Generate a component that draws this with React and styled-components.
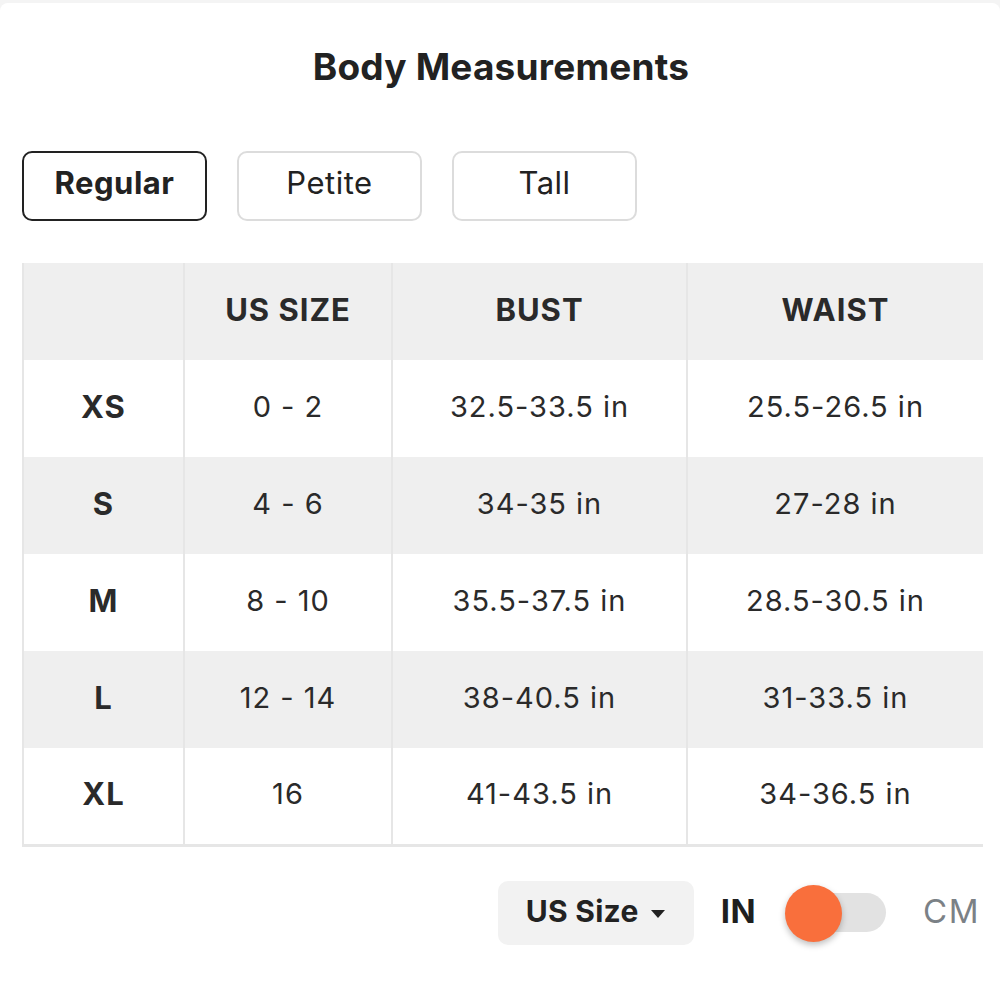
import React from "react";
import styled, { createGlobalStyle } from "styled-components";

const Global = createGlobalStyle`
  html, body { margin: 0; padding: 0; background: #f4f4f4; }
  body { font-family: "Inter", "Liberation Sans", sans-serif; color: #262626; }
`;

const Card = styled.div`
  margin-top: 3px;
  background: #fff;
  border-radius: 8px 8px 0 0;
  min-height: 997px;
  padding: 0 20px 0 22px;
  box-sizing: border-box;
  overflow: hidden;
`;

const Title = styled.h1`
  margin: 0;
  padding-top: 41px;
  height: 104px;
  box-sizing: border-box;
  text-align: center;
  font-size: 37px;
  font-weight: 700;
  letter-spacing: 0.2px;
  color: #222;
`;

const Tabs = styled.div`
  display: flex;
  gap: 30px;
  margin-top: 44px;
`;

const Tab = styled.button`
  width: 185px;
  height: 70px;
  box-sizing: border-box;
  background: #fff;
  border: 2px solid ${(p) => (p.$active ? "#222" : "#dcdcdc")};
  border-radius: 10px;
  font-family: inherit;
  font-size: 31px;
  letter-spacing: 0.5px;
  font-weight: ${(p) => (p.$active ? 700 : 400)};
  color: #222;
  padding: 0 0 8px;
`;

const Table = styled.table`
  margin-top: 42px;
  width: 960px;
  border-collapse: collapse;
  table-layout: fixed;
  border-left: 2px solid #e6e6e6;
  border-bottom: 3px solid #e6e6e6;
`;

const Row = styled.tr`
  height: 97px;
  background: ${(p) => (p.$shade ? "#efefef" : "#fff")};
`;

const Cell = styled.td`
  text-align: center;
  vertical-align: middle;
  font-size: ${(p) => (p.$bold ? 31 : 29)}px;
  letter-spacing: 1px;
  font-weight: ${(p) => (p.$bold ? 700 : 400)};
  color: #2a2a2a;
  border-right: 2px solid #e6e6e6;
  padding: 0 0 5px;
  &:last-child { border-right: none; }
`;

const Footer = styled.div`
  display: flex;
  justify-content: flex-end;
  align-items: center;
  margin-top: 34px;
  padding-right: 0;
`;

const Select = styled.div`
  display: flex;
  align-items: center;
  justify-content: center;
  gap: 11px;
  width: 196px;
  height: 64px;
  padding-bottom: 3px;
  box-sizing: border-box;
  background: #f2f2f2;
  border-radius: 10px;
  font-size: 30px;
  letter-spacing: 0.3px;
  font-weight: 700;
  color: #222;
`;

const Caret = styled.svg`
  width: 16px;
  height: 10px;
  margin-top: 5px;
`;

const UnitLabel = styled.span`
  font-size: 33px;
  letter-spacing: ${(p) => (p.$on ? 0.5 : 1.5)}px;
  font-weight: ${(p) => (p.$on ? 700 : 400)};
  color: ${(p) => (p.$on ? "#1f1f1f" : "#7b8186")};
  margin-left: ${(p) => p.$ml}px;
  padding-bottom: 3px;
`;

const Switch = styled.div`
  position: relative;
  width: 101px;
  height: 40px;
  margin-left: 29px;
  display: flex;
  align-items: center;
`;

const Track = styled.div`
  margin-left: 16px;
  width: 85px;
  height: 39px;
  border-radius: 20px;
  background: #e2e2e2;
`;

const Knob = styled.div`
  position: absolute;
  left: 0;
  top: -8px;
  width: 57px;
  height: 57px;
  border-radius: 50%;
  background: #f96f3c;
  box-shadow: 0 3px 6px rgba(0, 0, 0, 0.25);
`;

const rows = [
  ["XS", "0 - 2", "32.5-33.5 in", "25.5-26.5 in"],
  ["S", "4 - 6", "34-35 in", "27-28 in"],
  ["M", "8 - 10", "35.5-37.5 in", "28.5-30.5 in"],
  ["L", "12 - 14", "38-40.5 in", "31-33.5 in"],
  ["XL", "16", "41-43.5 in", "34-36.5 in"],
];

export default function App() {
  return (
    <>
      <Global />
      <Card>
        <Title>Body Measurements</Title>
        <Tabs>
          <Tab $active>Regular</Tab>
          <Tab>Petite</Tab>
          <Tab>Tall</Tab>
        </Tabs>
        <Table>
          <colgroup>
            <col style={{ width: 161 }} />
            <col style={{ width: 208 }} />
            <col style={{ width: 295 }} />
            <col style={{ width: 296 }} />
          </colgroup>
          <tbody>
            <Row $shade>
              <Cell />
              <Cell $bold>US SIZE</Cell>
              <Cell $bold>BUST</Cell>
              <Cell $bold>WAIST</Cell>
            </Row>
            {rows.map((r, i) => (
              <Row key={r[0]} $shade={i % 2 === 1}>
                <Cell $bold>{r[0]}</Cell>
                <Cell>{r[1]}</Cell>
                <Cell>{r[2]}</Cell>
                <Cell>{r[3]}</Cell>
              </Row>
            ))}
          </tbody>
        </Table>
        <Footer>
          <Select>
            US Size
            <Caret viewBox="0 0 16 10">
              <path d="M1 1 L15 1 L8 9 Z" fill="#222" />
            </Caret>
          </Select>
          <UnitLabel $on $ml={27}>IN</UnitLabel>
          <Switch>
            <Track />
            <Knob />
          </Switch>
          <UnitLabel $ml={37}>CM</UnitLabel>
        </Footer>
      </Card>
    </>
  );
}
